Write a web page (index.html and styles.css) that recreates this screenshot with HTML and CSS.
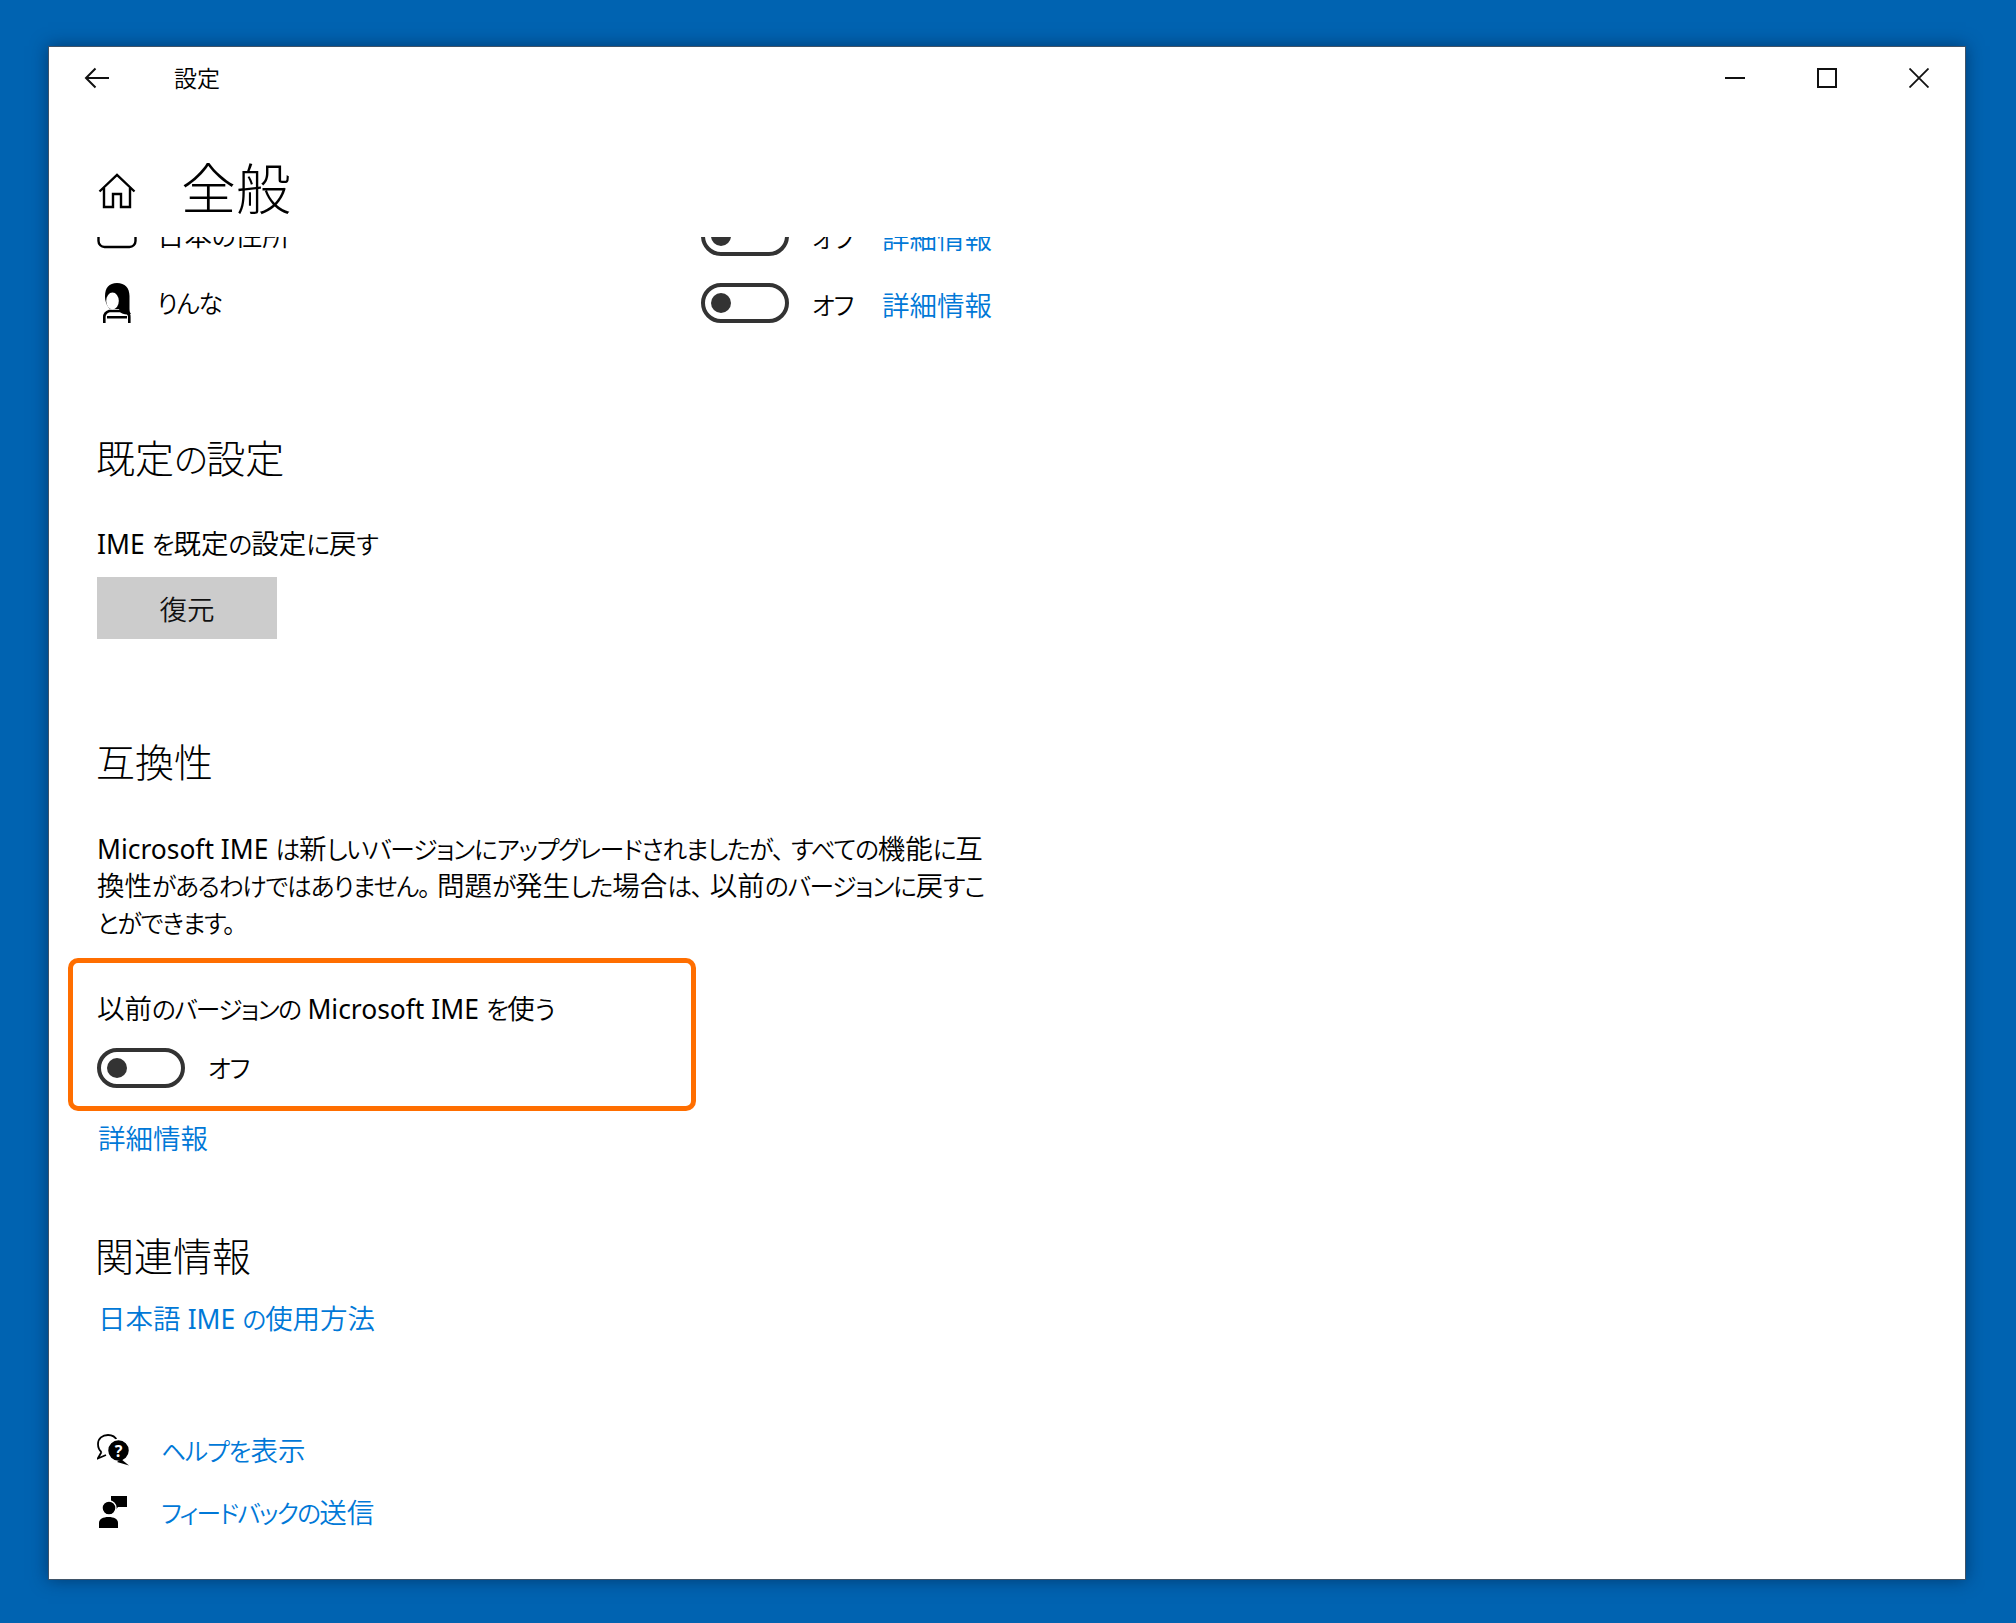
FILE: index.html
```html
<!DOCTYPE html>
<html lang="ja">
<head>
<meta charset="utf-8">
<title>設定</title>
<link rel="stylesheet" href="styles.css">
</head>
<body>
<div class="window">
  <header class="titlebar">
    <svg class="back" width="26" height="22" viewBox="0 0 26 22"><path d="M25 11H2M11.500 1.500 2 11l9.500 9.500" fill="none" stroke="#111" stroke-width="2"/></svg>
    <span class="app-name">設定</span>
    <div class="controls">
      <div class="ctl"><svg width="20" height="20" viewBox="0 0 20 20"><path d="M0 10h20" stroke="#111" stroke-width="2"/></svg></div>
      <div class="ctl"><svg width="20" height="20" viewBox="0 0 20 20"><rect x="1" y="1" width="18" height="18" fill="none" stroke="#111" stroke-width="2"/></svg></div>
      <div class="ctl"><svg width="20" height="20" viewBox="0 0 20 20"><path d="M.5.500l19 19M19.500.500l-19 19" fill="none" stroke="#111" stroke-width="1.800"/></svg></div>
    </div>
  </header>
  <div class="page-head">
    <svg class="home" width="38" height="36" viewBox="0 0 38 36"><path d="M1.500 18.500 19 2l17.500 16.500M6 15v19h9V21h8v13h9V15" fill="none" stroke="#000" stroke-width="2.400"/></svg>
    <h1 class="page-title">全般</h1>
  </div>
  <main class="scroll">
    <div class="row row-clipped">
      <span class="row-icon"><svg width="40" height="40" viewBox="0 0 40 40"><rect x="1.500" y="2" width="37" height="29" rx="6" fill="none" stroke="#000" stroke-width="2.400"/></svg></span>
      <span class="row-label">日本<span class="k">の</span>住所</span>
      <span class="toggle"></span><span class="state"><span class="k">オフ</span></span><a class="link row-link">詳細情報</a>
    </div>
    <div class="row">
      <span class="row-icon"><svg width="40" height="40" viewBox="0 0 40 40"><path d="M7.300 40v-6c0-3 2-5 5-6h15c3 1 5 3 5 6v6" fill="none" stroke="#000" stroke-width="2.600"/><path d="M10 33h20v2.500H10Z"/><path d="M20 0c8 0 12.500 5 12.500 13v13c0 2 .5 4 1.500 5-5 1-9 0-11-2l-1-3h-9C9 22 8 17 8 13 8 5 12 0 20 0Z"/><ellipse cx="15.500" cy="18" rx="6.300" ry="8.500" fill="#fff"/></svg></span>
      <span class="row-label"><span class="k">りんな</span></span>
      <span class="toggle"></span><span class="state"><span class="k">オフ</span></span><a class="link row-link">詳細情報</a>
    </div>

    <h2 class="section section-default">既定<span class="k">の</span>設定</h2>
    <p class="text reset-label"><span class="lat">IME</span> <span class="k">を</span>既定<span class="k">の</span>設定<span class="k">に</span>戻<span class="k">す</span></p>
    <button class="btn">復元</button>

    <h2 class="section section-compat">互換性</h2>
    <p class="text para"><span class="lat">Microsoft IME</span> <span class="k">は</span>新<span class="k">しいバージョンにアップグレードされましたが<span class="punct">、</span>すべての</span>機能<span class="k">に</span>互<br>換性<span class="k">があるわけではありません<span class="punct">。</span></span>問題<span class="k">が</span>発生<span class="k">した</span>場合<span class="k">は<span class="punct">、</span></span>以前<span class="k">のバージョンに</span>戻<span class="k">すこ</span><br><span class="k">とができます<span class="punct">。</span></span></p>
    <div class="highlight">
      <p class="text">以前<span class="k">のバージョンの</span> <span class="lat">Microsoft IME</span> <span class="k">を</span>使<span class="k">う</span></p>
      <div class="toggle-row"><span class="toggle"></span><span class="state"><span class="k">オフ</span></span></div>
    </div>
    <a class="link block more">詳細情報</a>

    <h2 class="section section-related">関連情報</h2>
    <a class="link block usage">日本語 <span class="lat">IME</span> <span class="k">の</span>使用方法</a>

    <div class="help-row help-first">
      <svg width="32" height="32" viewBox="0 0 32 32"><path d="M4.500 18C2 16 1 13 1 10 1 4.500 5.500 1 11 1c4 0 7.500 2 9 5.500M4.500 18 .8 24.500 9 21" fill="none" stroke="#000" stroke-width="1.800"/><circle cx="21.500" cy="16.500" r="11" stroke="#fff" stroke-width="1.500"/><path d="M24 25l8 6.500-12-3.500Z"/><text x="21.500" y="22.500" class="q">?</text></svg>
      <a class="link help-link"><span class="k">ヘルプを</span>表示</a>
    </div>
    <div class="help-row help-second">
      <svg width="32" height="32" viewBox="0 0 32 32"><path d="M12 0h16v11h-9l-4 5 .5-5H12Z"/><circle cx="10" cy="12" r="7" stroke="#fff" stroke-width="1.400"/><path d="M0 32v-5c0-4 4-6 9.500-6s9.500 2 9.500 6v5Z"/></svg>
      <a class="link help-link"><span class="k">フィードバックの</span>送信</a>
    </div>
  </main>
</div>
</body>
</html>
```
FILE: styles.css
```css
*, *::before, *::after { box-sizing: border-box; }
html, body { margin: 0; height: 100%; }
body {
  background: #0063b1;
  font-family: "Noto Sans", "Noto Sans CJK JP", sans-serif;
  font-feature-settings: "palt";
  font-weight: 350;
  color: #000;
  padding: 46px 50px 43px 48px;
}
.window {
  height: 1534px;
  background: #fff;
  border: 1px solid #3f5368;
  box-shadow: 0 0 16px rgba(0, 20, 50, .5);
  display: flex;
  flex-direction: column;
  overflow: hidden;
}
.k { font-size: .9em; letter-spacing: -.045em; line-height: 1; }
.lat { font-size: .96em; font-weight: 400; line-height: 1; }
.para .k { letter-spacing: -.05em; }
.highlight .text .k { letter-spacing: -.065em; }
.punct { margin-right: 8px; }
.titlebar { height: 62px; display: flex; align-items: center; padding-left: 35px; }
.back { flex: none; }
.app-name { margin-left: 64px; font-size: 23px; line-height: 30px; }
.controls { margin-left: auto; display: flex; }
.ctl { width: 92px; height: 62px; display: flex; align-items: center; justify-content: center; }
.page-head { height: 128px; display: flex; align-items: flex-start; padding: 49px 0 0 49px; flex: none; }
.home { margin-top: 15px; flex: none; }
.page-title { margin: 0 0 0 45px; font-size: 55px; line-height: 60px; font-weight: 300; }
.scroll { flex: 1; overflow: hidden; padding-left: 48px; }
.row { display: flex; align-items: center; height: 40px; margin-bottom: 27px; }
.row-clipped { margin-top: -21px; }
.row-icon { width: 60px; height: 40px; flex: none; }
.row-icon svg { display: block; }
.row-label { width: 544px; font-size: 27.5px; line-height: 36px; padding-bottom: 1px; white-space: nowrap; }
.toggle {
  width: 88px; height: 40px; border: 4px solid #333; border-radius: 20px;
  flex: none; position: relative; display: block;
}
.toggle::before {
  content: ""; position: absolute; left: 6px; top: 6px; width: 20px; height: 20px;
  border-radius: 50%; background: #333;
}
.state { margin-left: 23px; width: 43px; font-size: 27.5px; line-height: 36px; white-space: nowrap; }
.row .state { padding-top: 3px; }
.link { color: #0078d7; font-size: 27.5px; line-height: 37px; white-space: nowrap; }
.row-link { margin-left: 27px; padding-top: 4px; }
.block { display: block; }
.section { margin: 0 0 0 -1px; font-size: 39px; line-height: 50px; font-weight: 300; }
.section-default { margin-top: 110px; }
.section-compat { margin-top: 98px; }
.section-related { margin-top: 74px; margin-left: -2px; }
.text { margin: 0; font-size: 27.5px; line-height: 37px; white-space: nowrap; }
.reset-label { margin-top: 42px; }
.btn {
  display: block; width: 180px; height: 62px; margin-top: 15px; border: 0; padding: 0;
  background: #ccc; color: #111; font: inherit; font-size: 27.5px;
}
.para { margin-top: 43px; }
.highlight { position: relative; margin-top: 49px; }
.highlight::after {
  content: ""; position: absolute; left: -29px; top: -32px; bottom: -23px; width: 628px;
  border: 5px solid #ff6e00; border-radius: 10px; pointer-events: none;
}
.toggle-row { display: flex; align-items: center; margin-top: 21px; }
.more { margin-top: 32px; margin-left: 1px; }
.usage { margin-top: 19px; margin-left: 1px; }
.help-row { display: flex; align-items: center; height: 40px; }
.help-row svg { flex: none; }
.help-first { margin-top: 93px; }
.help-second { margin-top: 22px; padding-left: 2px; }
.help-second .k { letter-spacing: -.07em; }
.help-link { margin-left: 32px; }
.help-second .help-link { margin-left: 30px; }
.q { font-size: 16px; font-weight: 700; fill: #fff; text-anchor: middle; }
```
